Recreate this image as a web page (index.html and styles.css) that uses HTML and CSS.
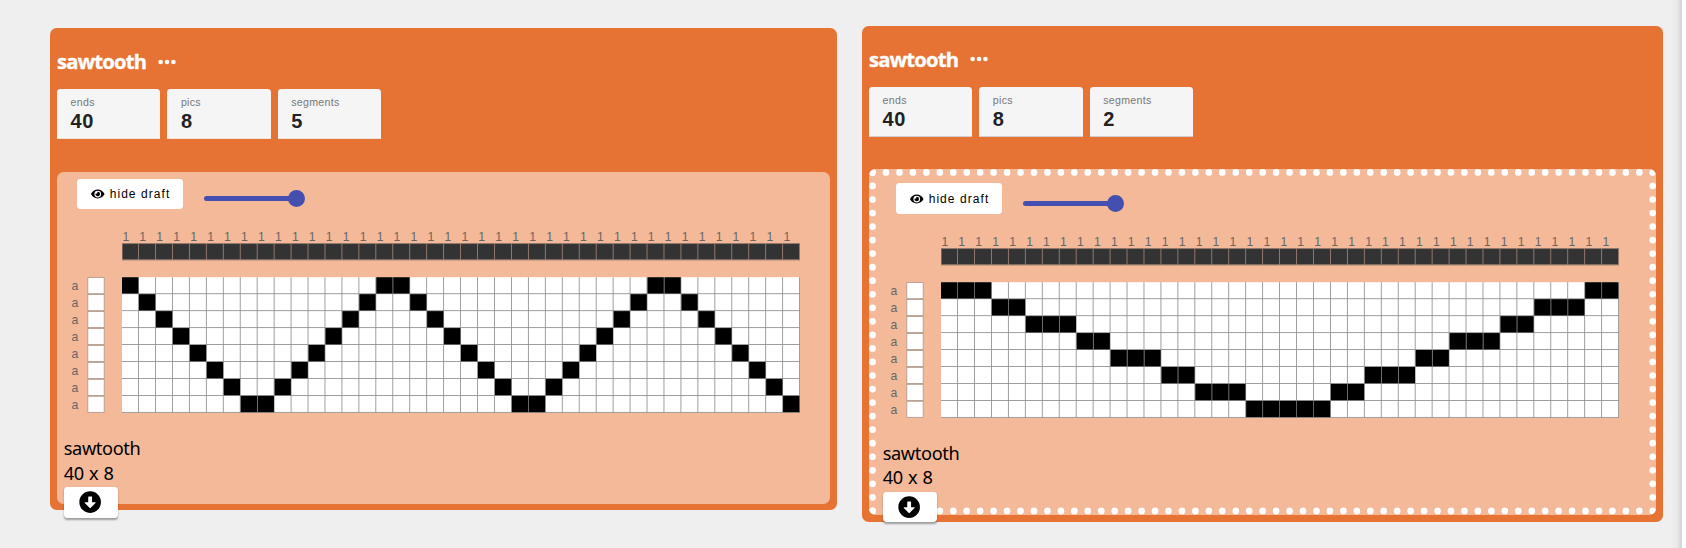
FILE: index.html
```html
<!DOCTYPE html>
<html lang="en">
<head>
<meta charset="utf-8">
<title>Drafts</title>
<link rel="stylesheet" href="styles.css">
</head>
<body>
<main class="workspace">
  <section class="card card-first">
    <header class="card-header"><h2 class="title">sawtooth</h2>
      <svg class="more" viewBox="0 0 18 6"><circle cx="2.6" cy="3" r="2.3"/><circle cx="9" cy="3" r="2.3"/><circle cx="15.4" cy="3" r="2.3"/></svg>
    </header>
    <div class="fields">
      <div class="field"><span class="label">ends</span><span class="value">40</span></div>
      <div class="field"><span class="label">pics</span><span class="value">8</span></div>
      <div class="field"><span class="label">segments</span><span class="value">5</span></div>
    </div>
    <div class="panel">
      <div class="toolbar">
        <button class="toggle"><svg class="eye" viewBox="0 0 576 512"><path d="M572.5 241.4C518.3 135.6 410.9 64 288 64S57.7 135.6 3.5 241.4a32.4 32.4 0 0 0 0 29.2C57.7 376.4 165.1 448 288 448s230.3-71.6 284.5-177.4a32.4 32.4 0 0 0 0-29.2zM288 400a144 144 0 1 1 144-144 143.900 143.900 0 0 1-144 144zm0-240a95.300 95.300 0 0 0-25.300 3.800 47.900 47.900 0 0 1-66.900 66.900A95.800 95.800 0 1 0 288 160z"/></svg>hide draft</button>
        <div class="slider"><span class="track"></span><span class="thumb"></span></div>
      </div>
      <div class="draft" data-rows="0123456776543210012345677654321001234567"></div>
      <div class="caption">sawtooth<br>40 x 8</div>
      <button class="download"><svg class="arrow" viewBox="0 0 512 512"><path d="M504 256c0 137-111 248-248 248S8 393 8 256 119 8 256 8s248 111 248 248zM212 140v116h-70.900c-10.700 0-16.100 13-8.500 20.500l114.900 114.300c4.700 4.700 12.200 4.700 16.900 0l114.900-114.300c7.600-7.600 2.200-20.500-8.500-20.500H300V140c0-6.600-5.400-12-12-12h-64c-6.600 0-12 5.400-12 12z"/></svg></button>
    </div>
  </section>
  <section class="card card-second">
    <header class="card-header"><h2 class="title">sawtooth</h2>
      <svg class="more" viewBox="0 0 18 6"><circle cx="2.6" cy="3" r="2.3"/><circle cx="9" cy="3" r="2.3"/><circle cx="15.4" cy="3" r="2.3"/></svg>
    </header>
    <div class="fields">
      <div class="field"><span class="label">ends</span><span class="value">40</span></div>
      <div class="field"><span class="label">pics</span><span class="value">8</span></div>
      <div class="field"><span class="label">segments</span><span class="value">2</span></div>
    </div>
    <div class="panel selected">
      <svg class="dots" viewBox="0 0 787 345.300"><path d="M3.400 3.400H783.600" stroke-dasharray="0 13.452"/><path d="M3.400 341.900H783.600" stroke-dasharray="0 13.452"/><path d="M3.400 3.400V342" stroke-dasharray="0 13.540"/><path d="M783.600 3.400V342" stroke-dasharray="0 13.540"/></svg>
      <div class="toolbar">
        <button class="toggle"><svg class="eye" viewBox="0 0 576 512"><path d="M572.5 241.4C518.3 135.6 410.9 64 288 64S57.7 135.6 3.5 241.4a32.4 32.4 0 0 0 0 29.2C57.7 376.4 165.1 448 288 448s230.3-71.6 284.5-177.4a32.4 32.4 0 0 0 0-29.2zM288 400a144 144 0 1 1 144-144 143.900 143.900 0 0 1-144 144zm0-240a95.300 95.300 0 0 0-25.300 3.800 47.900 47.900 0 0 1-66.900 66.900A95.800 95.800 0 1 0 288 160z"/></svg>hide draft</button>
        <div class="slider"><span class="track"></span><span class="thumb"></span></div>
      </div>
      <div class="draft" data-rows="0001122233444556667777766555443332211100"></div>
      <div class="caption">sawtooth<br>40 x 8</div>
      <button class="download"><svg class="arrow" viewBox="0 0 512 512"><path d="M504 256c0 137-111 248-248 248S8 393 8 256 119 8 256 8s248 111 248 248zM212 140v116h-70.900c-10.700 0-16.100 13-8.500 20.500l114.900 114.300c4.700 4.700 12.200 4.700 16.900 0l114.900-114.300c7.600-7.600 2.200-20.500-8.500-20.500H300V140c0-6.600-5.400-12-12-12h-64c-6.600 0-12 5.400-12 12z"/></svg></button>
    </div>
  </section>
</main>
<div class="edge"></div>
<script src="draft.js"></script>
</body>
</html>
```
FILE: styles.css
```css
* { box-sizing: border-box; }
body { margin: 0; width: 1686px; height: 548px; overflow: hidden; background: #efefef; display: flex; font-family: "Noto Sans", sans-serif; }
.workspace { width: 1682px; height: 548px; display: flex; align-items: flex-start; gap: 25.300px; padding-left: 50.300px; background: linear-gradient(to right, #efefef 1671px, #e9e9e9 1677px, #d2d2d2 1682px); }
.edge { width: 4px; background: #fff; }
.card { flex: none; background: #e67333; border-radius: 6.700px; padding: 0 6.700px; }
.card-first { margin-top: 28px; width: 786.700px; height: 482px; }
.card-second { margin-top: 25.700px; width: 800.700px; height: 496px; }
.card-header { display: flex; align-items: center; gap: 12px; height: 61px; padding-top: 6px; }
.title { margin: 0; width: 89px; color: #fff; font: 700 20.200px/27px "Open Sans", sans-serif; -webkit-text-stroke: .35px #fff; letter-spacing: -.75px; white-space: nowrap; }
.more { width: 18px; height: 6px; fill: #fff; }
.fields { display: flex; gap: 6.800px; height: 50px; }
.field { width: 103.500px; padding: 7px 13.600px 0; background: #f5f5f5; border-bottom: 1px solid #cfcfcf; border-radius: 3.400px 3.400px 0 0; display: flex; flex-direction: column; font-family: "Liberation Sans", sans-serif; }
.card-first .field { border-bottom-color: #efe3dc; }
.label { font-size: 10.600px; line-height: 13px; color: #777; letter-spacing: .3px; }
.value { font-size: 20px; line-height: 24px; font-weight: 700; color: #222; letter-spacing: .5px; }
.panel { position: relative; margin-top: 32.700px; height: 332px; border-radius: 6.700px; background: #f4b999; padding: 7px 0 0 6.700px; }
.panel.selected { height: 345.300px; padding: 14px 0 0 13.700px; }
.dots { position: absolute; inset: 0; width: 100%; height: 100%; border-radius: 6.700px; fill: none; stroke: #fff; stroke-width: 6.700; stroke-linecap: round; }
.toolbar { display: flex; height: 41.500px; padding-left: 13.500px; }
.toggle { display: flex; align-items: center; gap: 5px; width: 106px; height: 30.500px; padding: 0 0 0 14px; border: 0; border-radius: 3.400px; background: #fff; color: #000; font: 12px "Liberation Sans", sans-serif; letter-spacing: 1.060px; white-space: nowrap; }
.eye { width: 13.500px; height: 12px; flex: none; }
.slider { position: relative; width: 101px; height: 17px; margin: 11.500px 0 0 20.500px; display: flex; align-items: center; }
.track { width: 92px; height: 5px; border-radius: 2.500px; background: #444fb0; }
.thumb { position: absolute; right: 0; top: 0; width: 17px; height: 17px; border-radius: 50%; background: #444fb0; }
.draft { height: 208px; }
.draft svg { display: block; width: 740px; height: 208px; }
.draft text { font: 12.200px "Liberation Sans", sans-serif; fill: #666; }
.caption { font-size: 18.200px; line-height: 24.500px; letter-spacing: -.35px; word-spacing: .8px; color: #000; padding-top: 8px; }
.download { position: relative; display: flex; align-items: center; justify-content: center; width: 54px; height: 30.500px; margin-top: 2px; padding: 0 2px 0 0; border: 0; border-radius: 3.400px; background: #fff; box-shadow: 0 1.500px 2px rgba(0,0,0,.35); }
.arrow { width: 22.300px; height: 22.300px; }
```
FILE: draft.js
```js
const CELL = 16.95, COLS = 40, ROWS = 8, LEFT = 58, WARP = 23.2, TOP = 57.2;
const rect = (x, y, w, h, fill) => `<rect x="${x}" y="${y}" width="${w}" height="${h}" fill="${fill}"/>`;
document.querySelectorAll('.draft').forEach(el => {
  let s = rect(LEFT, WARP, COLS * CELL, CELL, '#333') + rect(LEFT, TOP, COLS * CELL, ROWS * CELL, '#fff');
  for (let r = 0; r < ROWS; r++) {
    const y = TOP + r * CELL;
    s += rect(LEFT, y + CELL - 0.85, COLS * CELL, 0.85, '#8f8f8f');
    s += `<text x="7.6" y="${y + 12.8}">a</text>`;
    s += `<rect x="23.8" y="${y + 0.4}" width="16.4" height="${CELL - 0.85}" fill="#fff" stroke="#b09a8e" stroke-width=".85"/>`;
  }
  for (let c = 0; c < COLS; c++) {
    const x = LEFT + c * CELL;
    s += `<text x="${x + 0.4}" y="20.8">1</text>`;
    s += rect(x + CELL - 0.85, TOP, 0.85, ROWS * CELL, '#8f8f8f');
    s += rect(x + CELL - 0.85, WARP, 0.85, CELL, '#a18475');
  }
  for (let c = 0; c < COLS; c++) {
    const x = LEFT + c * CELL, y = TOP + Number(el.dataset.rows[c]) * CELL;
    s += rect(x, y, CELL - 0.6, CELL - 0.6, '#000');
  }
  s += rect(LEFT, WARP, COLS * CELL, 0.85, '#a18475') + rect(LEFT, WARP + 16.1, COLS * CELL, 0.85, '#a18475') + rect(LEFT, WARP, 0.6, CELL, '#a18475');
  el.innerHTML = `<svg viewBox="0 0 740 208">${s}</svg>`;
});
```
